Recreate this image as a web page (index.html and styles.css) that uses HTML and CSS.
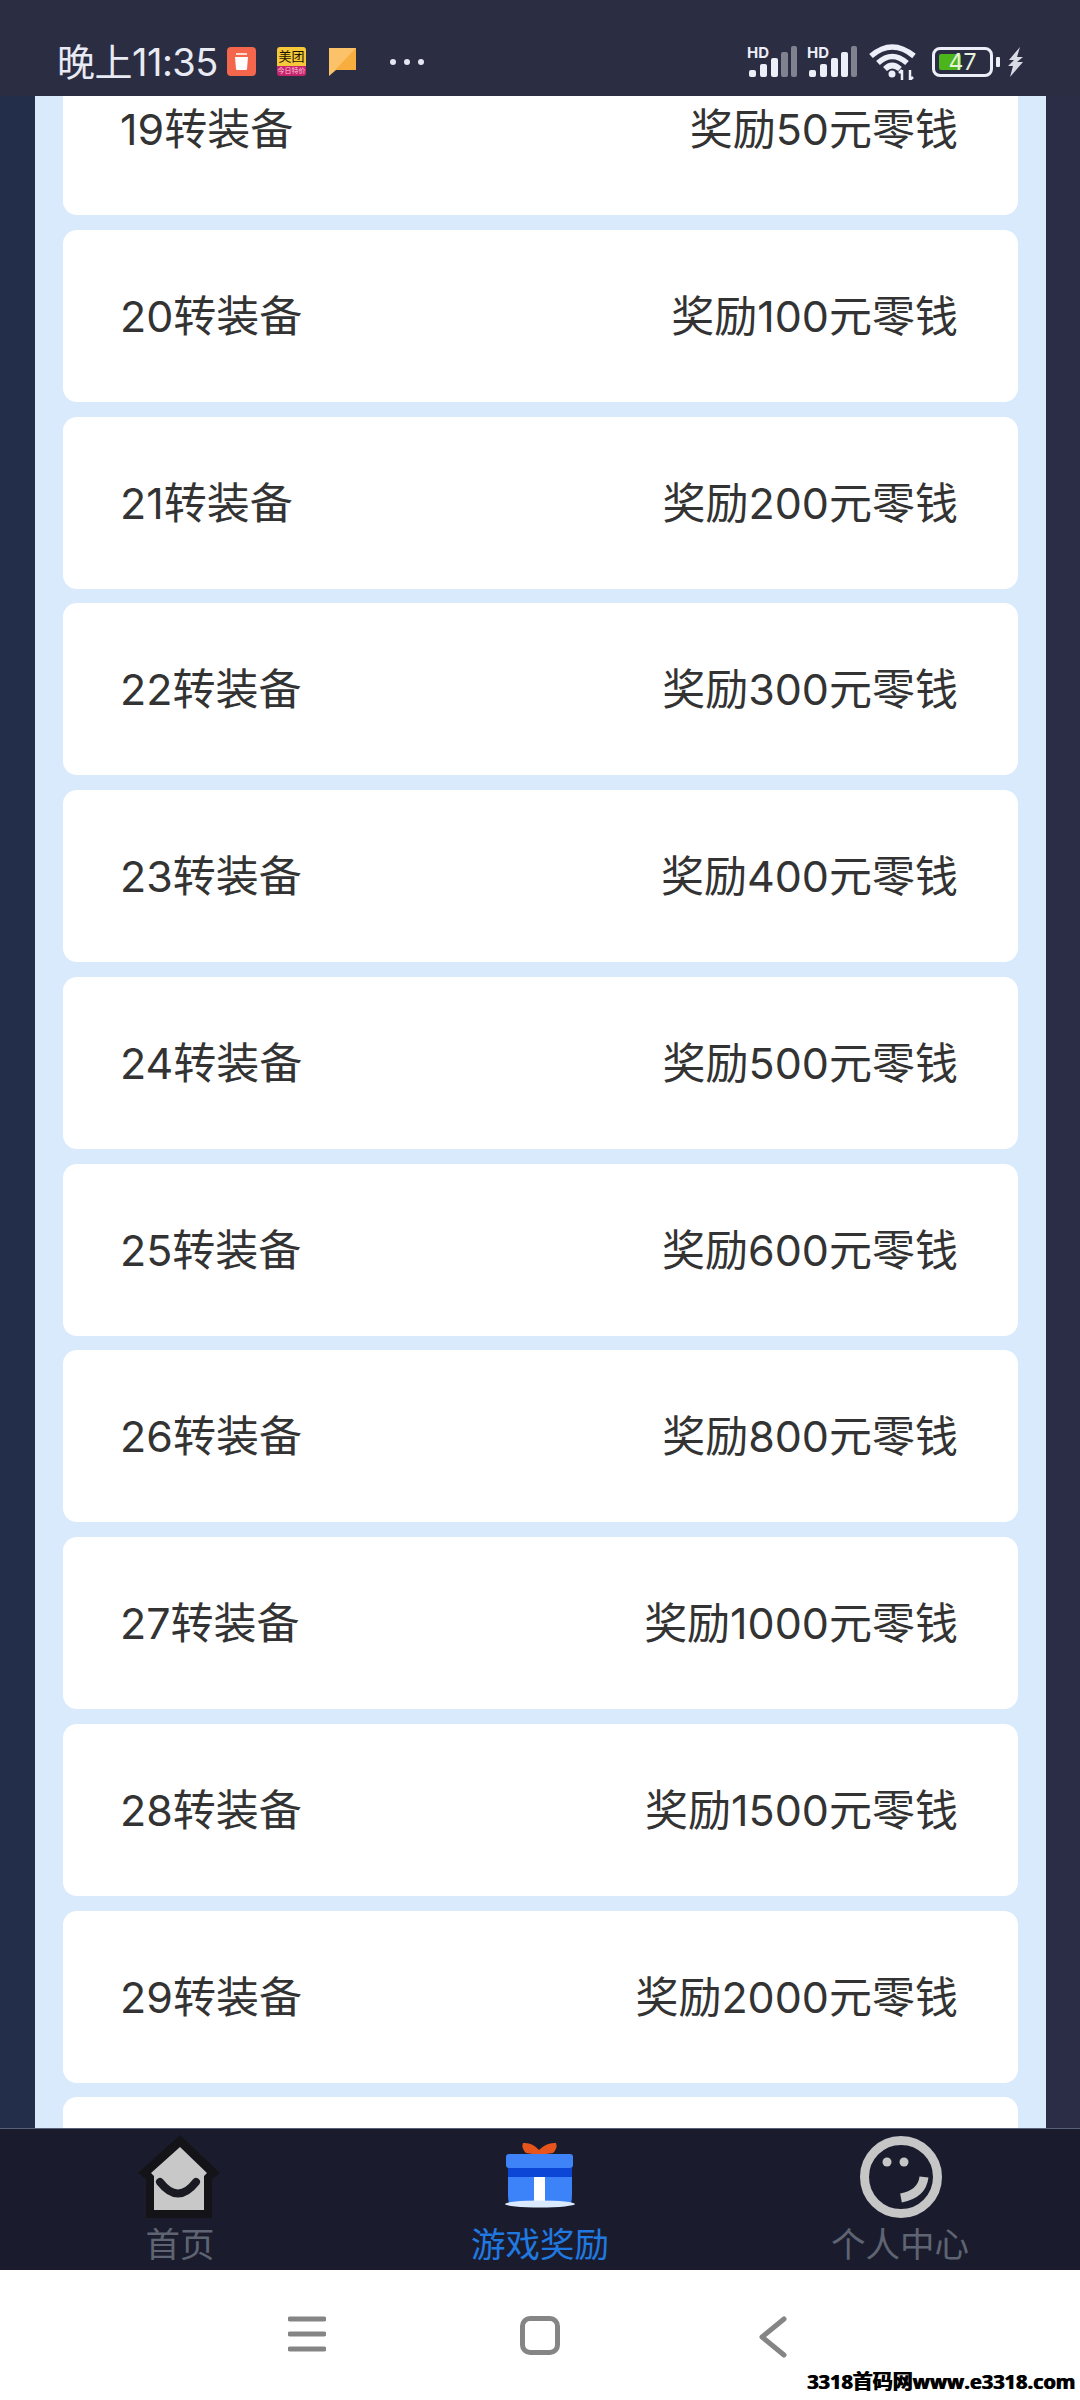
FILE: index.html
```html
<!DOCTYPE html>
<html lang="zh">
<head>
    <meta charset="utf-8">
    <title>游戏奖励</title>
    <link rel="stylesheet" href="styles.css">
</head>
<body>
    <div class="app">
        <!-- status bar -->
        <div class="status">
            <span class="time">晚上11:35</span>
            <svg class="ic-trash" width="29" height="29" viewBox="0 0 29 29">
                <rect width="29" height="29" rx="4" fill="#f4674d"/>
                <rect x="9" y="6" width="11" height="2" fill="#ffd9cf"/>
                <path d="M8 10h13l-1 12q0 1-1 1H10q-1 0-1-1z" fill="#fff"/>
            </svg>
            <div class="meituan">
                <span class="mt-top">美团</span>
                <span class="mt-bot">今日特价</span>
            </div>
            <svg class="ic-note" width="27" height="29" viewBox="0 0 27 29">
                <path d="M0 1h27v22H7l-7 6z" fill="#fbc26a"/>
                <path d="M27 1v22H6z" fill="#f8ae3f"/>
            </svg>
            <svg class="ic-dots" width="36" height="8" viewBox="0 0 36 8">
                <circle cx="4" cy="4" r="3" fill="#e4e6f2"/>
                <circle cx="18" cy="4" r="3" fill="#e4e6f2"/>
                <circle cx="32" cy="4" r="3" fill="#e4e6f2"/>
            </svg>
            <div class="status-right">
                <div class="signal">
                    <span class="hd">HD</span>
                    <svg width="50" height="31" viewBox="0 0 50 31">
                        <rect x="2" y="24" width="7" height="7" rx="2" fill="#eceef8"/>
                        <rect x="13" y="18" width="7" height="13" rx="2" fill="#eceef8"/>
                        <rect x="24" y="12" width="7" height="19" rx="2" fill="#eceef8"/>
                        <rect x="34" y="6" width="7" height="25" rx="2" fill="#80828f"/>
                        <rect x="44" y="0" width="6" height="31" rx="2" fill="#80828f"/>
                    </svg>
                </div>
                <div class="signal">
                    <span class="hd">HD</span>
                    <svg width="50" height="31" viewBox="0 0 50 31">
                        <rect x="2" y="24" width="7" height="7" rx="2" fill="#eceef8"/>
                        <rect x="13" y="18" width="7" height="13" rx="2" fill="#eceef8"/>
                        <rect x="24" y="12" width="7" height="19" rx="2" fill="#eceef8"/>
                        <rect x="34" y="6" width="7" height="25" rx="2" fill="#eceef8"/>
                        <rect x="44" y="0" width="6" height="31" rx="2" fill="#80828f"/>
                    </svg>
                </div>
                <svg class="ic-wifi" width="47" height="36" viewBox="0 0 47 36" fill="none" stroke="#eceef8" stroke-width="5.5">
                    <path d="M2 12Q23-6 45 12"/>
                    <path d="M9 19Q23 6 38 19"/>
                    <path d="M16 25Q23 18 31 25"/>
                    <circle cx="23" cy="30" r="3.5" fill="#eceef8" stroke="none"/>
                    <path d="M33 36v-10M30 29l3-3M41 26v10M44 33l-3 3" stroke-width="2.5"/>
                </svg>
                <div class="battery">
                    <div class="batt-fill" style="width:47%"></div>
                    <span class="batt-num">47</span>
                </div>
                <div class="batt-nub"></div>
                <svg class="ic-bolt" width="16" height="30" viewBox="0 0 16 30">
                    <path d="M12 0L1 13h5l-6 6h5l-3 11 13-15h-6l6-5h-6z" fill="#d9dbe4"/>
                </svg>
            </div>
        </div>

        <!-- reward list -->
        <div class="main">
            <div class="panel">
                <div class="row"><span>19转装备</span><span>奖励50元零钱</span></div>
                <div class="row"><span>20转装备</span><span>奖励100元零钱</span></div>
                <div class="row"><span>21转装备</span><span>奖励200元零钱</span></div>
                <div class="row"><span>22转装备</span><span>奖励300元零钱</span></div>
                <div class="row"><span>23转装备</span><span>奖励400元零钱</span></div>
                <div class="row"><span>24转装备</span><span>奖励500元零钱</span></div>
                <div class="row"><span>25转装备</span><span>奖励600元零钱</span></div>
                <div class="row"><span>26转装备</span><span>奖励800元零钱</span></div>
                <div class="row"><span>27转装备</span><span>奖励1000元零钱</span></div>
                <div class="row"><span>28转装备</span><span>奖励1500元零钱</span></div>
                <div class="row"><span>29转装备</span><span>奖励2000元零钱</span></div>
                <div class="row"></div>
            </div>
        </div>

        <!-- bottom tabs -->
        <div class="tabs">
            <div class="tab">
                <svg width="88" height="96" viewBox="0 0 88 96">
                    <path d="M44 6L84 44L76 50V89H10V50L2 44Z" fill="#131318"/>
                    <path d="M44 18L71 44L68 47V81H18V47L15 44Z" fill="#c8c8c8"/>
                    <path d="M24 53Q42 76 60 53" fill="none" stroke="#1a1a22" stroke-width="8" stroke-linecap="round"/>
                </svg>
                <span class="tab-label">首页</span>
            </div>
            <div class="tab active">
                <svg width="80" height="96" viewBox="0 0 80 96">
                    <g transform="translate(0 2)">
                        <path d="M23 12q-2 5 3 10l13 2 14-2q5-5 3-10-9-1-17 7-7-8-16-7z" fill="#e8551c"/>
                        <path d="M8 38h64v25q0 11-3 11H11q-3 0-3-11z" fill="#3c82f8"/>
                        <rect x="6" y="23" width="67" height="14" rx="3" fill="#3f83f8"/>
                        <rect x="8" y="37" width="64" height="9" fill="#0b46d6"/>
                        <rect x="34" y="46" width="11" height="26" fill="#fff"/>
                        <ellipse cx="40" cy="73" rx="35" ry="3.5" fill="#dceaff"/>
                    </g>
                </svg>
                <span class="tab-label">游戏奖励</span>
            </div>
            <div class="tab">
                <svg width="90" height="96" viewBox="0 0 90 96">
                    <circle cx="46" cy="48" r="36.5" fill="none" stroke="#c6c6c6" stroke-width="9"/>
                    <circle cx="32" cy="33" r="4.5" fill="#c6c6c6"/>
                    <circle cx="49" cy="33" r="4.5" fill="#c6c6c6"/>
                    <path d="M69 48Q67 65 46 69" fill="none" stroke="#c6c6c6" stroke-width="9"/>
                </svg>
                <span class="tab-label">个人中心</span>
            </div>
        </div>

        <!-- system nav -->
        <div class="sysnav">
            <div class="sys-slot">
                <svg width="38" height="36" viewBox="0 0 38 36">
                    <path d="M2 3H36M2 18H36M2 33H36" stroke="#858585" stroke-width="5" stroke-linecap="round"/>
                </svg>
            </div>
            <div class="sys-slot">
                <div class="sys-square"></div>
            </div>
            <div class="sys-slot">
                <svg width="28" height="42" viewBox="0 0 28 42">
                    <path d="M25 3L3 21L25 39" fill="none" stroke="#858585" stroke-width="5" stroke-linecap="round" stroke-linejoin="round"/>
                </svg>
            </div>
        </div>
        <div class="watermark">3318首码网www.e3318.com</div>
    </div>
</body>
</html>
```

FILE: styles.css
```css
* {
    box-sizing: border-box;
}

html, body {
    margin: 0;
    padding: 0;
}

body {
    font-family: Inter, "Noto Sans CJK SC", sans-serif;
    background-color: #fff;
}

.app {
    position: relative;
    display: flex;
    flex-direction: column;
    width: 1080px;
    height: 2400px;
    overflow: hidden;
}

/* status bar */
.status {
    display: flex;
    align-items: center;
    flex: 0 0 96px;
    padding: 37px 56px 10px 57px;
    background-color: #2b2d42;
}

.time {
    width: 170px;
    font-size: 38px;
    line-height: 44px;
    letter-spacing: -0.5px;
    white-space: nowrap;
    color: #e8eaf4;
}

.meituan {
    display: flex;
    flex-direction: column;
    width: 29px;
    height: 29px;
    margin-left: 21px;
    border-radius: 3px;
    overflow: hidden;
}

.mt-top {
    flex: 0 0 19px;
    font-size: 13px;
    line-height: 19px;
    text-align: center;
    white-space: nowrap;
    color: #1a1200;
    background-color: #f6c93a;
}

.mt-bot {
    flex: 1;
    font-size: 7px;
    line-height: 10px;
    text-align: center;
    white-space: nowrap;
    color: #f7c6d8;
    background-color: #c8246e;
}

.ic-note {
    margin-left: 23px;
}

.ic-dots {
    margin-left: 33px;
}

.status-right {
    display: flex;
    align-items: center;
    margin-left: auto;
}

.signal {
    position: relative;
    width: 50px;
    height: 31px;
    margin-right: 10px;
}

.signal svg {
    display: block;
}

.hd {
    position: absolute;
    top: -2px;
    left: 0;
    font-size: 15px;
    line-height: 18px;
    font-weight: 700;
    color: #eceef8;
}

.ic-wifi {
    margin: 0 16px 0 2px;
}

.battery {
    position: relative;
    width: 61px;
    height: 30px;
    padding: 4px;
    border: 3px solid #eceef8;
    border-radius: 8px;
}

.batt-fill {
    height: 100%;
    border-radius: 2px;
    background-color: #4cb51c;
}

.batt-num {
    position: absolute;
    top: 0;
    left: 0;
    right: 0;
    font-size: 23px;
    line-height: 24px;
    text-align: center;
    color: #e6f2dc;
}

.batt-nub {
    width: 4px;
    height: 10px;
    margin: 0 8px 0 3px;
    border-radius: 1px;
    background-color: #eceef8;
}

/* list */
.main {
    flex: 1;
    min-height: 0;
    padding: 0 34px 0 35px;
    overflow: hidden;
    background: linear-gradient(90deg, #232f4a, #2a2d45);
}

.panel {
    display: flex;
    flex-direction: column;
    gap: 14.75px;
    margin-top: -80px;
    padding: 27px 28px 0 28px;
    background-color: #d9eafd;
}

.row {
    display: flex;
    flex: 0 0 172px;
    align-items: center;
    justify-content: space-between;
    padding: 0 60px 6px 57px;
    font-size: 43px;
    color: #333;
    background-color: #fff;
    border-radius: 14px;
}

/* tabs */
.tabs {
    display: grid;
    grid-template-columns: repeat(3, 1fr);
    flex: 0 0 142px;
    border-top: 1px solid #59607a;
    background-color: #1a1c2e;
}

.tab {
    display: flex;
    flex-direction: column;
    align-items: center;
    height: 141px;
}

.tab svg {
    display: block;
    flex: 0 0 96px;
}

.tab-label {
    font-size: 34.5px;
    line-height: 40px;
    color: #5f6472;
}

.active .tab-label {
    color: #2079e0;
}

/* system nav */
.sysnav {
    display: grid;
    grid-template-columns: repeat(3, 233px);
    justify-content: center;
    flex: 0 0 130px;
    padding-top: 46px;
    background-color: #fff;
}

.sys-slot {
    display: flex;
    justify-content: center;
    align-items: flex-start;
}

.sys-square {
    width: 40px;
    height: 39px;
    border: 5px solid #858585;
    border-radius: 10px;
}

.watermark {
    position: absolute;
    right: 5px;
    bottom: 6px;
    font-family: "Open Sans", "Noto Sans CJK SC", sans-serif;
    font-size: 20px;
    line-height: 24px;
    font-weight: 700;
    white-space: nowrap;
    color: #000;
    text-shadow: 1px 0 #000;
}
```
